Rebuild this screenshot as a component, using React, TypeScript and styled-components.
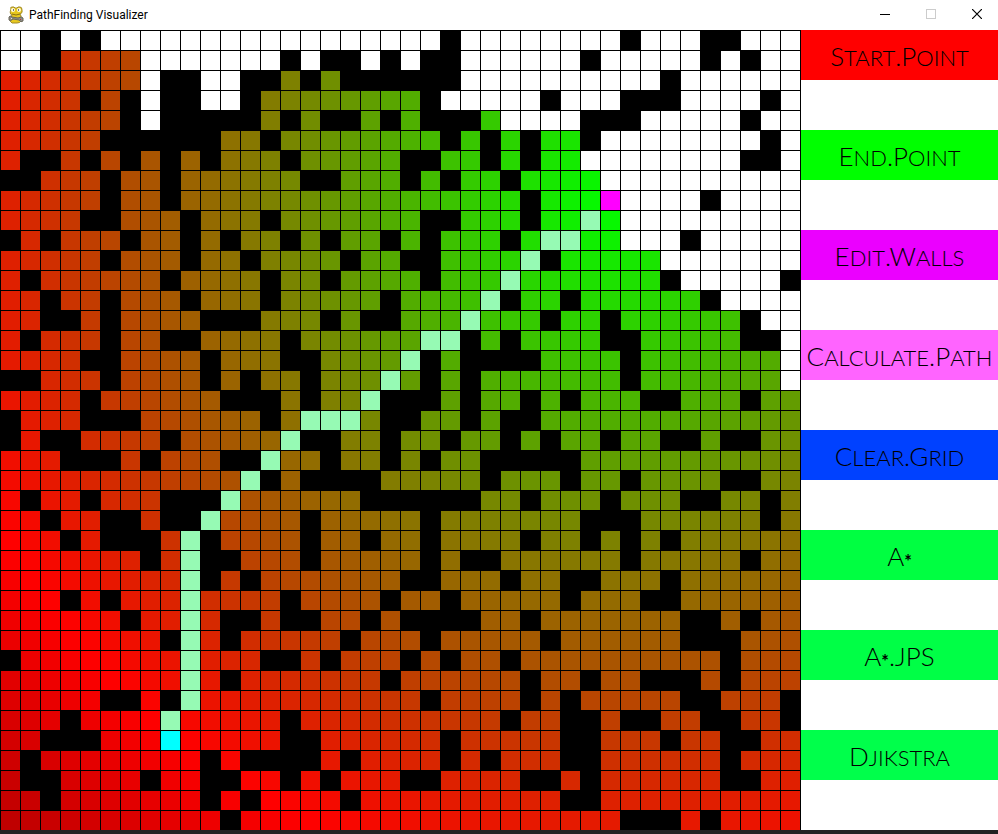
import React from "react";
import styled, { createGlobalStyle } from "styled-components";

const GlobalStyle = createGlobalStyle`
  *, *::before, *::after { box-sizing: border-box; }
  body { margin: 0; background: #ffffff; }
`;

/*
 * Board legend:
 *   #  wall      .  explored cell    _  untouched cell
 *   p  path      S  start            E  end
 */
const BOARD = [
  "__#_#_________________#________#___##___",
  "__#...._______#_##_#_##______#_____#_#__",
  "......._##__##.#.######__________#______",
  "....#.#_##__#........#_____#___###____#_",
  "......#_#####.#.##.#.###.____###_____#__",
  ".....######..#........#.#.#..#________#_",
  ".##.#.#.#.#...#.....##..#.#..________##_",
  "##...#..#......##...#.#..#....__________",
  ".....#..#.................#...E____#____",
  "....##...#...#.......##...#..p._________",
  "#.#...#..#.#..#.#..#.#...#.pp..___#_____",
  ".....#...#..#....#..##....p#....._______",
  ".#......#....#..#....#...p.......#_____#",
  "..#..#...#...#.....#....p#..#......#____",
  "..##.#....###...#.##...p...#..#......#__",
  ".#...#..##....#......pp#.#....##.....##_",
  "....##....#...##....p#.####....#......._",
  "##...#....#.#..#...p.#.#.......#......._",
  "....#......###.#..p###.#..#.#...##...#..",
  "#...###......#.ppp.##..#.##.............",
  "#.##....#.....p##..#..#..#.#..#..##.##..",
  "...###.#...##p..#..#.#..#####...........",
  "............p#.####.....#...#..#....##..",
  ".#..#...###p......######..#...#...##..#.",
  "..#..##.##p....#.....#.......###......#.",
  "...#.###.p#....#..#..#....#..#.#.#......",
  ".......#.p##...#.....#.##......#.....#..",
  ".........p#.#.......##...#..##...#......",
  "...#.#...p....#....#..#.....#...##......",
  "......#..p.##.##..#.####..#.......##.#..",
  "........#p.#.....#...#.....#......###...",
  "#........p...##.#...#.#..#..........#...",
  ".........p.#.......#......#..#..###.#...",
  ".....##.#p...........#....#.#.....##...#",
  "...#....p.....#..........#..##.##..##..#",
  "..###...S.....##......#.....##...#..##..",
  ".#........#.####.#....#.#...##......#...",
  ".##....#..##..#.#...##....##.#......##..",
  "..#.......#.#....#..........##..........",
  "...........#...................###.#....",
];

const END_ROW = BOARD.findIndex((row) => row.includes("E"));
const END_COL = BOARD[END_ROW].indexOf("E");
const SHADE_PER_CELL = 7.4;

const FIXED_COLOURS: Record<string, string> = {
  "#": "#000000",
  _: "#ffffff",
  p: "#96fab4",
  S: "#00ffff",
  E: "#ff00ff",
};

/* Explored cells fade green -> red -> dark red with distance from the end. */
function cellColour(kind: string, row: number, col: number): string {
  if (kind in FIXED_COLOURS) return FIXED_COLOURS[kind];
  const shade = Math.floor(Math.hypot(row - END_ROW, col - END_COL) * SHADE_PER_CELL);
  if (shade <= 255) return `rgb(${shade}, ${255 - shade}, 0)`;
  return `rgb(${510 - shade}, 0, 0)`;
}

const Window = styled.div`
  display: flex;
  flex-direction: column;
  min-height: 100vh;
  background: #ffffff;
`;

const TitleBar = styled.header`
  display: flex;
  align-items: center;
  height: 30px;
  padding-left: 8px;
  overflow: hidden;
`;

const Title = styled.h1`
  flex: 1;
  margin: 0 0 0 5px;
  font: 400 12px/16px Roboto, "Open Sans", sans-serif;
  color: #000000;
`;

const WindowControls = styled.div`
  display: flex;
  margin-right: -2px;
`;

const ControlButton = styled.button`
  display: flex;
  align-items: center;
  justify-content: center;
  width: 46px;
  height: 30px;
  padding: 0 0 2px;
  border: 0;
  background: transparent;
  color: #000000;

  &:disabled { color: #cccccc; }
`;

const Content = styled.main`
  display: flex;
  flex: 1;
`;

const Board = styled.div`
  display: grid;
  flex: none;
  grid-template-columns: repeat(40, 19px);
  grid-auto-rows: 19px;
  align-content: start;
  gap: 1px;
  padding: 1px 1px 0;
  background: #000000;
`;

const Cell = styled.div``;

const Menu = styled.nav`
  display: flex;
  flex: 1;
  flex-direction: column;
  gap: 50px;
`;

const MenuButton = styled.button<{ $fill: string }>`
  height: 50px;
  padding: 0 0 2px;
  border: 0;
  background: ${(p) => p.$fill};
  color: #000000;
  font: 300 31px/48px Lato, sans-serif;
  font-variant-caps: small-caps;
  white-space: nowrap;
`;

const Capital = styled.span`
  font-size: 26px;
  line-height: 1;
`;

const Star = styled.span`
  font-size: 18px;
  font-weight: 700;
  line-height: 1;
  vertical-align: -2px;
`;

const Footer = styled.footer`
  height: 4px;
  background: #222222;
`;

const MENU = [
  { label: "Start.Point", fill: "#ff0000" },
  { label: "End.Point", fill: "#00ff00" },
  { label: "Edit.Walls", fill: "#eb00ff" },
  { label: "Calculate.Path", fill: "#ff64ff" },
  { label: "Clear.Grid", fill: "#0041ff" },
  { label: "A*", fill: "#00ff41" },
  { label: "A*.JPS", fill: "#00ff46" },
  { label: "Djikstra", fill: "#00ff4b" },
];

function MenuLabel({ text }: { text: string }) {
  return (
    <>
      {text
        .split(/([A-Z.]+|\*)/)
        .filter(Boolean)
        .map((part, i) => {
          if (part === "*") return <Star key={i}>{part}</Star>;
          return /[A-Z.]/.test(part) ? <Capital key={i}>{part}</Capital> : part;
        })}
    </>
  );
}

function SnakeIcon() {
  return (
    <svg width="16" height="18" viewBox="0 0 16 18" aria-hidden="true">
      <path d="M3 3 Q2 1 4 1 L6 1 L7 2 H9 L10 1 H12 Q14 1 14 4 Q15 7 12 8 L13 10 V15 Q12 17 9 17 H4 Q2 16 2 13 L4 9 Q1 8 3 3Z" fill="#e8c81e" stroke="#a08a28" strokeWidth="1" />
      <path d="M4 8 Q8 10 12 8" fill="none" stroke="#8a7010" strokeWidth="1" />
      <circle cx="5" cy="4" r="2" fill="#fffbe0" />
      <circle cx="11" cy="4" r="2" fill="#fffbe0" />
      <rect x="5" y="3" width="1" height="2" fill="#777777" />
      <rect x="10" y="3" width="1" height="2" fill="#777777" />
      <path d="M1 11 Q2 9 4 11 L10 12 Q14 10 15 12 V15 Q13 17 11 14 L5 13 Q2 16 1 14Z" fill="#8c8c86" stroke="#6a675a" strokeWidth="1" />
      <rect x="3" y="12" width="1" height="1" fill="#dddddd" />
      <rect x="12" y="13" width="1" height="1" fill="#c03030" />
    </svg>
  );
}

export default function App() {
  return (
    <Window>
      <GlobalStyle />
      <TitleBar>
        <SnakeIcon />
        <Title>PathFinding Visualizer</Title>
        <WindowControls>
          <ControlButton type="button" aria-label="Minimize">
            <svg width="10" height="10" viewBox="0 0 10 10" shapeRendering="crispEdges">
              <rect y="5" width="10" height="1" fill="currentColor" />
            </svg>
          </ControlButton>
          <ControlButton type="button" aria-label="Maximize" disabled>
            <svg width="10" height="10" viewBox="0 0 10 10">
              <rect x="0.5" y="0.5" width="9" height="9" fill="none" stroke="currentColor" />
            </svg>
          </ControlButton>
          <ControlButton type="button" aria-label="Close">
            <svg width="10" height="10" viewBox="0 0 10 10">
              <path d="M0 0L10 10M10 0L0 10" stroke="currentColor" strokeWidth="1.2" />
            </svg>
          </ControlButton>
        </WindowControls>
      </TitleBar>
      <Content>
        <Board role="img" aria-label="Path finding grid">
          {BOARD.map((row, r) =>
            [...row].map((kind, c) => (
              <Cell key={`${r}-${c}`} style={{ background: cellColour(kind, r, c) }} />
            )),
          )}
        </Board>
        <Menu aria-label="Actions">
          {MENU.map((item) => (
            <MenuButton key={item.label} type="button" $fill={item.fill}>
              <MenuLabel text={item.label} />
            </MenuButton>
          ))}
        </Menu>
      </Content>
      <Footer />
    </Window>
  );
}
